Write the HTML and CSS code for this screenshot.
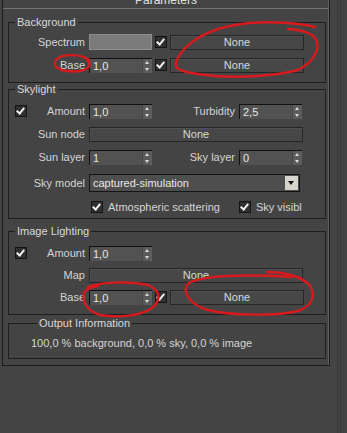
FILE: index.html
```html
<!DOCTYPE html>
<html lang="en">
<head>
    <meta charset="UTF-8">
    <title>Parameters</title>
    <link rel="stylesheet" href="styles.css">
</head>
<body>
    <div class="page">
        <div class="rollout">
            <div class="rollout-head">
                <span class="collapse">−</span>
                <span class="rollout-title">Parameters</span>
            </div>

            <fieldset class="group group-bg">
                <legend>Background</legend>
                <div class="row">
                    <div class="lbl"><span class="text">Spectrum</span></div>
                    <div class="swatch"></div>
                    <span class="check on"></span>
                    <button class="map-btn short">None</button>
                </div>
                <div class="row">
                    <div class="lbl"><span class="text">Base</span></div>
                    <div class="spin"><span class="val">1,0</span><span class="arrows"></span></div>
                    <span class="check on"></span>
                    <button class="map-btn short">None</button>
                </div>
            </fieldset>

            <fieldset class="group group-sky">
                <legend>Skylight</legend>
                <div class="row">
                    <div class="lbl"><span class="check on"></span><span class="text">Amount</span></div>
                    <div class="spin"><span class="val">1,0</span><span class="arrows"></span></div>
                    <div class="lbl-mid">Turbidity</div>
                    <div class="spin"><span class="val">2,5</span><span class="arrows"></span></div>
                </div>
                <div class="row">
                    <div class="lbl"><span class="text">Sun node</span></div>
                    <button class="map-btn wide">None</button>
                </div>
                <div class="row">
                    <div class="lbl"><span class="text">Sun layer</span></div>
                    <div class="spin"><span class="val">1</span><span class="arrows"></span></div>
                    <div class="lbl-mid">Sky layer</div>
                    <div class="spin"><span class="val">0</span><span class="arrows"></span></div>
                </div>
                <div class="row row-tall">
                    <div class="lbl"><span class="text">Sky model</span></div>
                    <div class="dropdown">
                        <span class="val">captured-simulation</span>
                        <span class="drop-arrow"></span>
                    </div>
                </div>
                <div class="row opts">
                    <span class="check on"></span>
                    <span class="opt-text">Atmospheric scattering</span>
                    <span class="check on second"></span>
                    <span class="opt-text">Sky visible</span>
                </div>
            </fieldset>

            <fieldset class="group group-img">
                <legend>Image Lighting</legend>
                <div class="row">
                    <div class="lbl"><span class="check on"></span><span class="text">Amount</span></div>
                    <div class="spin"><span class="val">1,0</span><span class="arrows"></span></div>
                </div>
                <div class="row">
                    <div class="lbl"><span class="text">Map</span></div>
                    <button class="map-btn wide">None</button>
                </div>
                <div class="row">
                    <div class="lbl"><span class="text">Base</span></div>
                    <div class="spin"><span class="val">1,0</span><span class="arrows"></span></div>
                    <span class="check on"></span>
                    <button class="map-btn short">None</button>
                </div>
            </fieldset>

            <fieldset class="group group-out">
                <legend>Output Information</legend>
                <div class="info">100,0 % background, 0,0 % sky, 0,0 % image</div>
            </fieldset>
        </div>
        <div class="scroll-edge"></div>
    </div>

    <!-- hand-drawn red marks on top of the screenshot -->
    <svg class="marks" width="347" height="433" viewBox="0 0 347 433">
        <path d="M315 27 C300 23 270 21 250 23 C228 25 210 30 195 40 C182 49 175 60 176 66 C178 72 195 74 215 76 C240 78 275 76 298 70 C312 63 319 52 317 42 C315 34 303 30 288 29" />
        <path d="M89 60 C82 54 62 53 56 60 C51 67 62 73 80 71 C90 69 92 64 87 60" />
        <path d="M88 287 C100 282 130 281 148 285 C160 290 162 300 152 308 C140 316 120 318 100 315 C86 311 82 300 84 293 C86 289 92 287 98 286" />
        <path d="M267 272 C288 272 304 278 310 286 C316 296 312 306 298 311 C278 316 232 316 208 310 C188 304 181 290 189 283 C203 276 240 274 292 277" />
    </svg>
</body>
</html>
```

FILE: styles.css
```css
body {
    margin: 0;
    width: 347px;
    height: 433px;
    overflow: hidden;
    position: relative;
    background-color: #444444;
    font-family: "Liberation Sans", Arial, sans-serif;
    font-size: 11px;
    color: #d4d4d4;
}

.page {
    display: flex;
    align-items: flex-start;
}

.rollout {
    margin-left: 2px;
    width: 326px;
    padding: 0 0 6px 0;
    border: 1px solid #1c1c1c;
    border-top: none;
    box-shadow: inset -1px 0 0 #606060;
}

.rollout-head {
    height: 8px;
    border-bottom: 1px solid #747474;
    display: flex;
    overflow: hidden;
    line-height: 13px;
    color: #e0e0e0;
}

.collapse {
    margin: -7px 0 0 6px;
    width: 10px;
}

.rollout-title {
    flex: 1;
    text-align: center;
    margin: -6px 16px 0 0;
    font-size: 12px;
}

.group {
    margin: 0 3px 0 5px;
    padding: 5px 0 9px 0;
    width: 318px;
    box-sizing: border-box;
    min-width: 0;
    border: 1px solid #1e1e1e;
}

.group legend {
    margin-left: 6px;
    padding: 0 2px;
    line-height: 13px;
    color: #d8d8d8;
}

.group-bg {
    margin-top: 7px;
}

.group-sky {
    padding-top: 7px;
    padding-bottom: 5px;
}

.group-img {
    margin-top: 6px;
    padding-top: 7px;
}

.group-img .row {
    margin-bottom: 6px;
}

.group-img .row:last-child {
    margin-bottom: 0;
}

.group-out {
    margin-top: 2px;
    padding: 7px 0 8px 22px;
}

.row {
    display: flex;
    align-items: center;
    height: 16px;
    margin-bottom: 7px;
}

.row:last-child {
    margin-bottom: 0;
}

.row-tall {
    height: 18px;
    margin-top: 9px;
    margin-bottom: 9px;
}

.lbl {
    width: 76px;
    margin-right: 4px;
    display: flex;
    align-items: center;
    justify-content: flex-end;
}

.lbl .check {
    margin: 0 auto 0 6px;
}

.lbl-mid {
    width: 83px;
    margin-right: 4px;
    text-align: right;
}

.check {
    width: 10px;
    height: 10px;
    border: 1px solid #141414;
    background-color: #303030;
    position: relative;
    flex: none;
}

.check.on::after {
    content: "";
    position: absolute;
    left: 2px;
    top: 0px;
    width: 3px;
    height: 6px;
    border: solid #f2f2f2;
    border-width: 0 2px 2px 0;
    transform: rotate(40deg);
}

.row > .check {
    margin: 0 3px 0 3px;
}

.swatch {
    width: 61px;
    height: 14px;
    background-color: #7b7b7b;
    border: 1px solid #8e8e8e;
}

.spin {
    width: 63px;
    height: 15px;
    display: flex;
    box-sizing: border-box;
    border-top: 1px solid #111;
    border-left: 1px solid #111;
    background-color: #525252;
}

.val {
    flex: 1;
    padding-left: 3px;
    line-height: 14px;
    color: #e8e8e8;
}

.arrows {
    width: 9px;
    background-color: #5c5c5c;
    border-left: 1px solid #444;
    position: relative;
}

.arrows::before,
.arrows::after {
    content: "";
    position: absolute;
    left: 2px;
    border-left: 2.5px solid transparent;
    border-right: 2.5px solid transparent;
}

.arrows::before {
    top: 2px;
    border-bottom: 3px solid #dcdcdc;
}

.arrows::after {
    bottom: 2px;
    border-top: 3px solid #dcdcdc;
}

.map-btn {
    height: 15px;
    padding: 0;
    font-family: inherit;
    font-size: 11px;
    line-height: 13px;
    color: #d8d8d8;
    background-color: #474747;
    border: 1px solid #262626;
    box-shadow: inset 1px 1px 0 #505050;
}

.map-btn.short {
    width: 134px;
}

.map-btn.wide {
    width: 214px;
}

.dropdown {
    width: 211px;
    height: 18px;
    box-sizing: border-box;
    display: flex;
    align-items: center;
    border: 1px solid #141414;
    background-color: #4e4e4e;
}

.dropdown .val {
    line-height: 16px;
}

.drop-arrow {
    width: 13px;
    height: 14px;
    margin-right: 1px;
    background-color: #d6d4cc;
    position: relative;
}

.drop-arrow::after {
    content: "";
    position: absolute;
    left: 3px;
    top: 5px;
    border-left: 3.5px solid transparent;
    border-right: 3.5px solid transparent;
    border-top: 4px solid #111;
}

.opts {
    height: 13px;
    margin-top: -1px;
    width: 293px;
    overflow: hidden;
    white-space: nowrap;
}

.opts .check {
    margin: 0 5px 0 82px;
}

.opts .check.second {
    margin-left: 19px;
}

.opt-text {
    color: #d4d4d4;
}

.info {
    line-height: 13px;
    color: #d4d4d4;
}

.scroll-edge {
    margin-left: 7px;
    width: 2px;
    height: 433px;
    border-left: 1px solid #383838;
    border-right: 1px solid #3b3b3b;
}

.marks {
    position: absolute;
    left: 0;
    top: 0;
    pointer-events: none;
}

.marks path {
    fill: none;
    stroke: #d81a1e;
    stroke-width: 2.4;
    stroke-linecap: round;
}
```
